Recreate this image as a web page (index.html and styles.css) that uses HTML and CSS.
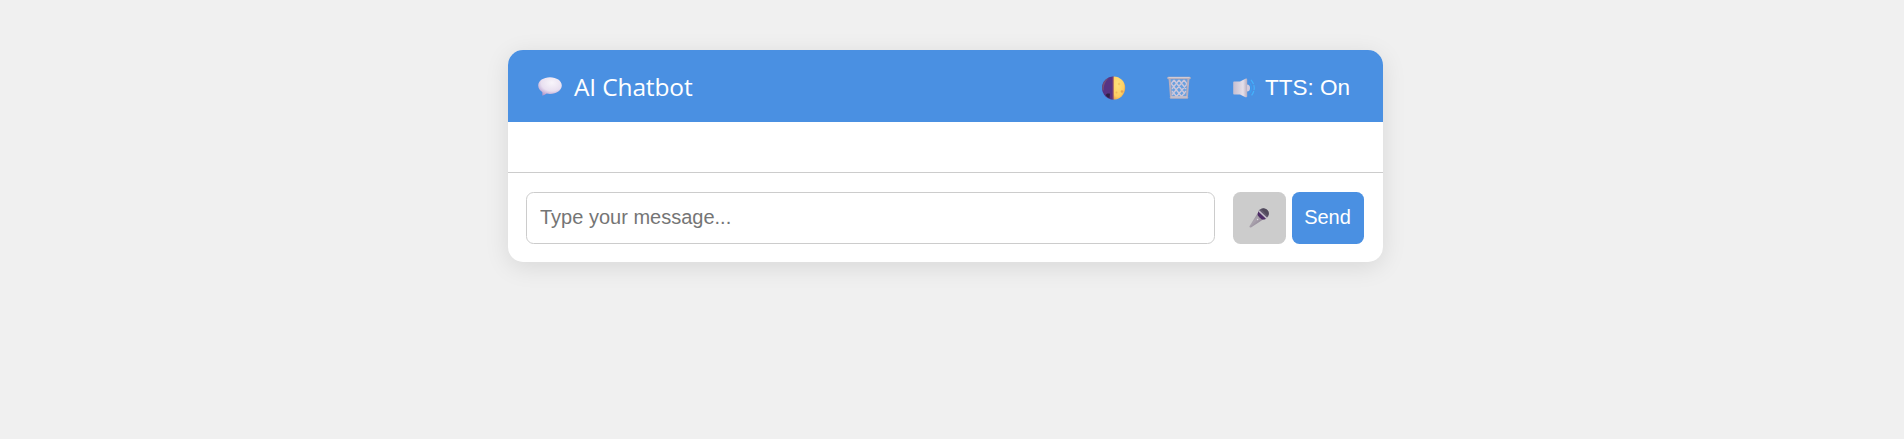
FILE: index.html
```html
<!DOCTYPE html>
<html lang="en">
<head>
<meta charset="utf-8">
<title>AI Chatbot</title>
<link rel="stylesheet" href="styles.css">
</head>
<body>
<main class="chat">
  <header class="chat-header">
    <svg width="24" height="19" viewBox="0 0 24 19">
      <defs><radialGradient id="bubble" cx=".58" cy=".3" r=".75"><stop offset="0" stop-color="#f8f5fb"/><stop offset=".6" stop-color="#e9e0f0"/><stop offset="1" stop-color="#b296cc"/></radialGradient></defs>
      <path d="M12 .3C5.400.3.2 3.900.2 8.400c0 2.800 1.700 5.100 4.100 6.500.2 1.200 0 2.600-.1 3.700 1.900-.3 3.400-1.200 4.500-2 1 .2 2.200.3 3.300.3 6.600 0 11.800-4 11.800-8.500S18.600.3 12 .3Z" fill="url(#bubble)"/>
    </svg>
    <h1 class="title">AI Chatbot</h1>
    <button class="header-btn" aria-label="Theme">
      <svg width="24" height="24" viewBox="0 0 24 24">
        <defs><radialGradient id="sun" cx=".35" cy=".35" r=".8"><stop offset="0" stop-color="#ffe17c"/><stop offset=".65" stop-color="#ffcf62"/><stop offset="1" stop-color="#d88b4c"/></radialGradient></defs>
        <path d="M11.500.5a11.500 11.500 0 0 0 0 23Z" fill="#573383"/>
        <path d="M7.500 1.200A11.500 11.500 0 0 0 .4 14l1.300.5C1.500 9 4 4 7.500 1.200Z" fill="#745078"/>
        <path d="M3.500 19c1-1.500 2.500-2 4.500-1.200l-.5 4.500A10 10 0 0 1 3.500 19Z" fill="#302044"/>
        <path d="M10.500.7H12v22.600h-1.500Z" fill="#8d4d6d"/>
        <path d="M11.700.5a11.500 11.500 0 0 1 0 23Z" fill="url(#sun)"/>
        <circle cx="17" cy="8" r="1.300" fill="#f6c963"/><circle cx="20" cy="15.500" r="1.300" fill="#e6a352"/><circle cx="14.500" cy="16.500" r="1" fill="#f0b75b"/>
      </svg>
    </button>
    <button class="header-btn" aria-label="Clear">
      <svg width="24" height="24" viewBox="0 0 24 24">
        <path d="M3 3.500 4.300 21h15.400L21 3.500" fill="#68a0df"/>
        <path d="m7 4 11 14M12 4l7 9M17 4l3 4M4.500 8 15 21M5 15l5 6M17 4 5 19M12 4 5 13M7 4 4 8M20 8 9 21M19 15l-5 6" stroke="#ccc7dc" stroke-width="1.350" fill="none"/>
        <path d="M2.600 3 4 21M21.400 3 20 21" stroke="#b6aebf" stroke-width="2"/>
        <path d="M1.500 2h21M4 21.500h16" stroke="#b9b0bd" stroke-width="2.600" stroke-linecap="round"/>
        <path d="M1.500 1.500h21M4 21h16" stroke="#d1cad3" stroke-width="1"/>
      </svg>
    </button>
    <button class="header-btn tts">
      <svg width="24" height="20" viewBox="0 0 24 20">
        <defs><linearGradient id="horn"><stop offset="0" stop-color="#c5bed0"/><stop offset=".7" stop-color="#e5dfe9"/><stop offset="1" stop-color="#b5aec2"/></linearGradient></defs>
        <path d="M2 3.500h6L13.500.7c1-.4 1.700.1 1.700 1v16.600c0 .9-.8 1.300-1.700.9L8 16.500H2q-.8 0-.8-.9V4.400Q1.200 3.500 2 3.500Z" fill="url(#horn)"/>
        <path d="M15 6.500a3 3.500 0 0 1 0 7Z" fill="#d4cbdd"/>
        <path d="M18 5q3 5 0 10" fill="none" stroke="#3c9ef1" stroke-width="1.200"/><path d="M19 1.800q6.500 8.200 0 16.400" fill="none" stroke="#45b1fa" stroke-width="1.200" stroke-dasharray="5 1"/>
      </svg>
      <span class="tts-label">TTS: On</span>
    </button>
  </header>
  <section class="messages"></section>
  <form class="composer">
    <input class="message" type="text" placeholder="Type your message...">
    <button class="btn mic" type="button" aria-label="Record">
      <svg width="20" height="20" viewBox="0 0 20 20">
        <defs><linearGradient id="handle" x1="0" y1="0" x2="1" y2="1"><stop offset="0" stop-color="#777080"/><stop offset=".45" stop-color="#aaa3ad"/><stop offset="1" stop-color="#7b6d85"/></linearGradient></defs>
        <path d="m8.300 5.700 5.800 5.700L2 19.500q-1.500.3-1.700-1Z" fill="url(#handle)"/>
        <circle cx="14.300" cy="5.700" r="5.500" fill="#625a6e"/>
        <path d="M12 1A5.500 5.500 0 0 1 19.800 6l-1.100 2Z" fill="#514a5c"/>
        <path d="M10.200 2.200 18.200 9.800 17 10.800 9.300 3.500Z" fill="#c7bfce"/>
        <path d="M9.200 3.700 16.900 11q-2 .8-4 .5L8.700 7.200q-.2-2 .5-3.500Z" fill="#4d2b67"/>
        <circle cx="8.600" cy="11.500" r=".7" fill="#ddd8e0"/>
      </svg>
    </button>
    <button class="btn send" type="button">Send</button>
  </form>
</main>
</body>
</html>
```
FILE: styles.css
```css
* { box-sizing: border-box; }
body {
  min-height: 439px;
  margin: 0;
  padding: 50px 13px 0 0;
  background: #f0f0f0;
  font-family: "Liberation Sans", Arial, sans-serif;
}
.chat {
  width: 875px;
  margin: 0 auto;
  background: #fff;
  border-radius: 15px;
  overflow: hidden;
  box-shadow: 0 5px 25px rgba(0, 0, 0, .1);
}
.chat-header {
  display: flex;
  align-items: center;
  height: 72px;
  padding: 0 33px 0 30px;
  background: #4a90e2;
  color: #fff;
}
.title {
  flex: 1;
  margin: 0 0 0 12px;
  padding-top: 2px;
  font: 400 24.500px/32px "Open Sans", sans-serif;
  letter-spacing: -.15px;
}
.header-btn {
  display: flex;
  align-items: center;
  gap: 9px;
  margin-left: 41px;
  padding: 4px 0 0;
  border: 0;
  background: none;
  color: #fff;
  font: 22.5px/26px "Liberation Sans", Arial, sans-serif;
}
.tts { padding-top: 3px; }
.tts-label { padding-top: 1px; }
.messages { height: 50px; }
.composer {
  display: flex;
  height: 90px;
  padding: 19px 19px 18px 18px;
  border-top: 1px solid #ccc;
}
.message {
  flex: 1;
  min-width: 0;
  margin-right: 18px;
  padding: 0 13px 2px;
  border: 1px solid #ccc;
  border-radius: 7.5px;
  outline: 0;
  font: 20px "Liberation Sans", Arial, sans-serif;
}
.message::placeholder { color: #757575; }
.btn {
  display: flex;
  align-items: center;
  justify-content: center;
  padding: 0;
  border: 0;
  border-radius: 7.5px;
  font: 20px "Liberation Sans", Arial, sans-serif;
}
.mic { width: 53px; margin-right: 6px; padding-right: 1px; background: #ccc; }
.send { width: 72px; padding: 0 1px 2px 0; background: #4a90e2; color: #fff; }
```
